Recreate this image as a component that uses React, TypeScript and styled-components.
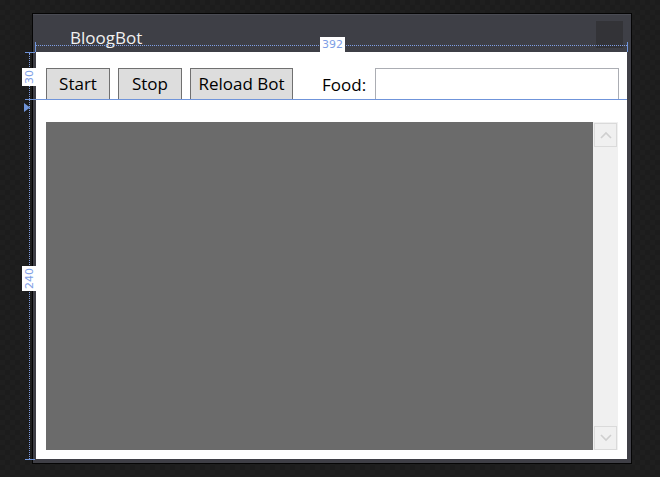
import React from 'react'
import styled, { createGlobalStyle } from 'styled-components'

const GlobalStyle = createGlobalStyle`
  html, body {
    margin: 0;
    padding: 0;
    width: 660px;
    height: 477px;
    overflow: hidden;
  }
  body {
    background-color: #1d1d1d;
    background-image: repeating-conic-gradient(#1c1c1c 0% 25%, #1f1f1f 0% 50%);
    background-size: 10px 10px;
    font-family: 'Open Sans', 'Noto Sans', sans-serif;
  }
`

const Canvas = styled.div`
  position: relative;
  width: 660px;
  height: 477px;
  padding: 13px 0 0 32px;
  box-sizing: border-box;
`

const Window = styled.div`
  width: 600px;
  height: 451px;
  box-sizing: border-box;
  border: 1px solid #050505;
  background: #3f3f46;
  display: flex;
  flex-direction: column;
`

const TitleBar = styled.div`
  height: 38px;
  flex: none;
  display: flex;
  align-items: center;
  justify-content: space-between;
  padding: 0 8px 0 37px;
  background: #3e3f46;
  border-top: 1px solid #4a4b53;
  box-sizing: border-box;
`

const Title = styled.span`
  color: #f1f1f1;
  font-size: 17px;
  padding-top: 7px;
`

const CloseBox = styled.div`
  width: 27px;
  height: 27px;
  background: #333337;
  margin-top: 1px;
`

const Frame = styled.div`
  flex: 1;
  padding: 0 4px 4px 3px;
  display: flex;
`

const Content = styled.div`
  flex: 1;
  background: #ffffff;
  display: flex;
  flex-direction: column;
`

const Toolbar = styled.div`
  height: 48px;
  box-sizing: border-box;
  padding: 16px 8px 0 10px;
  display: flex;
  align-items: flex-start;
`

const Button = styled.div<{ $w: number; $gap?: number }>`
  width: ${(p) => p.$w}px;
  height: 32px;
  margin-right: ${(p) => p.$gap ?? 8}px;
  box-sizing: border-box;
  border: 1px solid #707070;
  background: #dddddd;
  color: #000;
  font-size: 17px;
  display: flex;
  align-items: center;
  justify-content: center;
  padding-bottom: 1px;
`

const Label = styled.span`
  margin-left: 29px;
  margin-right: 9px;
  height: 32px;
  display: flex;
  align-items: center;
  font-size: 17px;
  color: #000;
  padding-bottom: 1px;
`

const TextBox = styled.div`
  flex: 1;
  height: 32px;
  box-sizing: border-box;
  border: 1px solid #abadb3;
  background: #fff;
`

const LogArea = styled.div`
  flex: 1;
  padding: 22px 9px 9px 10px;
  display: flex;
`

const Log = styled.div`
  flex: 1;
  background: #6b6b6b;
`

const ScrollBar = styled.div`
  width: 25px;
  background: #f0f0f0;
  display: flex;
  flex-direction: column;
  justify-content: space-between;
  padding: 1px 1px 0 1px;
  box-sizing: border-box;
`

const ArrowButton = styled.div`
  height: 24px;
  box-sizing: border-box;
  border: 1px solid #dadada;
  display: flex;
  align-items: center;
  justify-content: center;
`

const Adorner = styled.div`
  position: absolute;
  pointer-events: none;
`

const DottedH = styled(Adorner)`
  height: 0;
  border-top: 1px dotted #7f9fe6;
`

const DottedV = styled(Adorner)`
  width: 0;
  border-left: 1px dotted #7f9fe6;
`

const SolidH = styled(Adorner)`
  height: 1px;
  background: #6f94da;
`

const SolidV = styled(Adorner)`
  width: 1px;
  background: #6f94da;
`

const Tag = styled(Adorner)<{ $vertical?: boolean }>`
  background: #ffffff;
  color: #7f9fe6;
  font-family: 'DejaVu Sans', sans-serif;
  font-size: 11px;
  line-height: 14px;
  padding: 1px 2px;
  ${(p) => (p.$vertical ? 'transform: rotate(-90deg); transform-origin: left top;' : '')}
`

const Chevron = ({ up }: { up?: boolean }) => (
  <svg width="12" height="8" viewBox="0 0 12 8">
    <path
      d={up ? 'M1 7 L6 2 L11 7' : 'M1 1 L6 6 L11 1'}
      fill="none"
      stroke="#cfcfcf"
      strokeWidth="1.6"
    />
  </svg>
)

const App = () => {
  return (
    <>
      <GlobalStyle />
      <Canvas>
        <Window>
          <TitleBar>
            <Title>BloogBot</Title>
            <CloseBox />
          </TitleBar>
          <Frame>
            <Content>
              <Toolbar>
                <Button $w={64}>Start</Button>
                <Button $w={64}>Stop</Button>
                <Button $w={103} $gap={0}>Reload Bot</Button>
                <Label>Food:</Label>
                <TextBox />
              </Toolbar>
              <LogArea>
                <Log />
                <ScrollBar>
                  <ArrowButton>
                    <Chevron up />
                  </ArrowButton>
                  <ArrowButton>
                    <Chevron />
                  </ArrowButton>
                </ScrollBar>
              </LogArea>
            </Content>
          </Frame>
        </Window>

        {/* designer adorners */}
        <DottedH style={{ left: 36, top: 45, width: 591 }} />
        <SolidV style={{ left: 35, top: 42, height: 10 }} />
        <SolidV style={{ left: 627, top: 42, height: 10 }} />
        <SolidH style={{ left: 25, top: 52, width: 10 }} />
        <DottedV style={{ left: 29, top: 53, height: 406 }} />
        <SolidH style={{ left: 25, top: 99, width: 602 }} />
        <SolidH style={{ left: 25, top: 459, width: 10 }} />
        <Adorner style={{ left: 24, top: 95 }}>
          <svg width="7" height="9" viewBox="0 0 7 9">
            <path d="M0 0 L6 4.5 L0 9 Z" fill="#6f94da" />
          </svg>
        </Adorner>
        <Tag style={{ left: 320, top: 37 }}>392</Tag>
        <Tag $vertical style={{ left: 22, top: 86 }}>30</Tag>
        <Tag $vertical style={{ left: 22, top: 291 }}>240</Tag>
      </Canvas>
    </>
  )
}

export default App
